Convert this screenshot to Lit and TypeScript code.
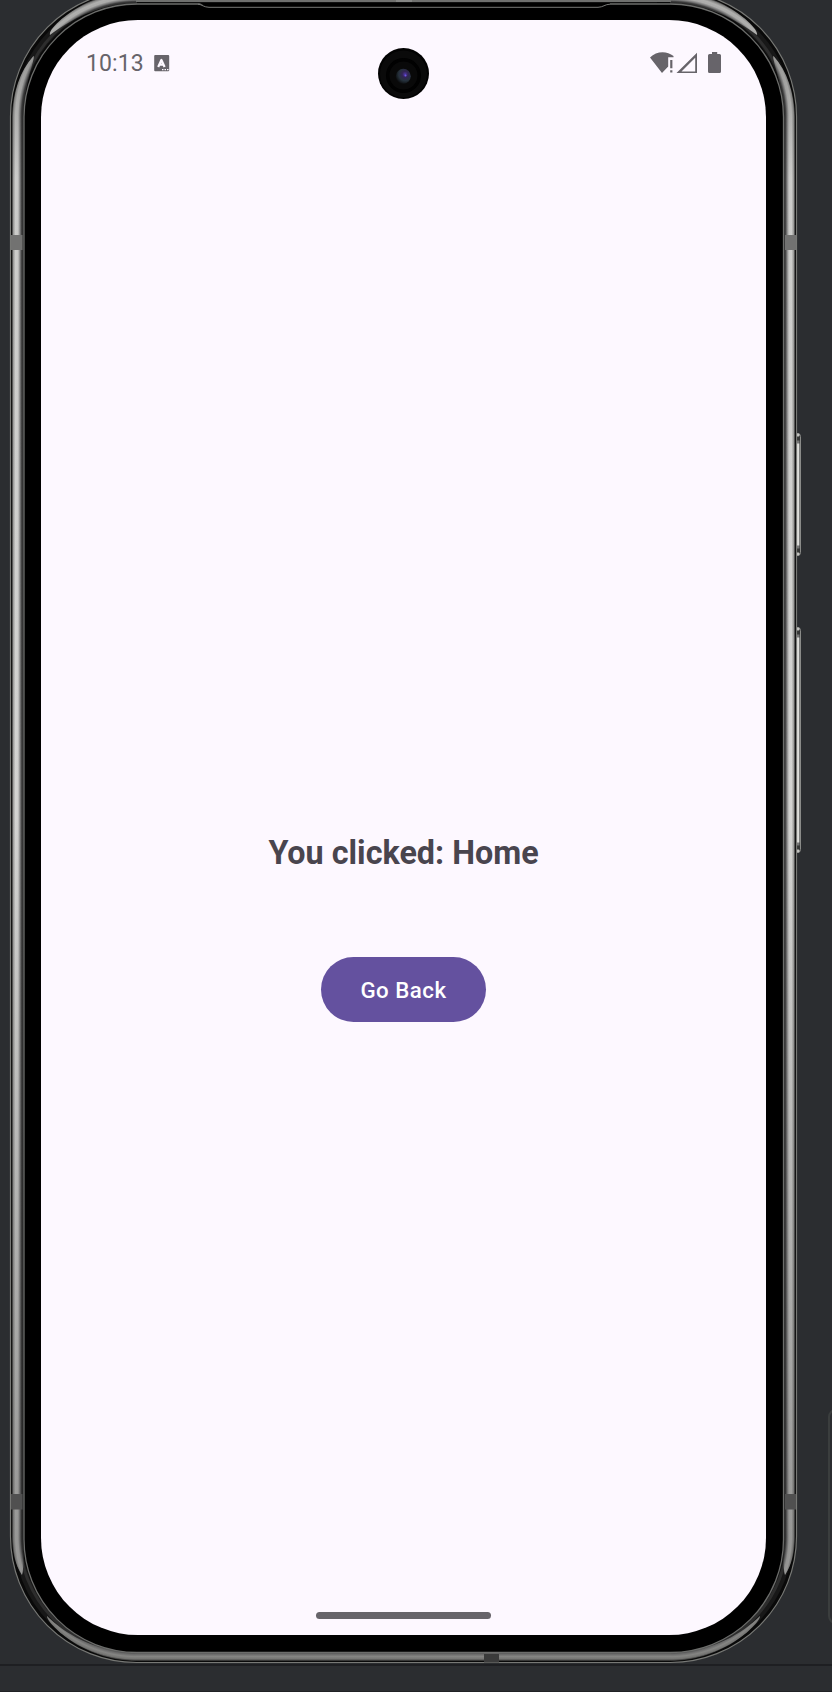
import { LitElement, html, css, svg } from "lit";
import { customElement } from "lit/decorators.js";

@customElement("device-frame")
class DeviceFrame extends LitElement {
  static styles = css`
    :host { display: block; }
    svg { display: block; }
  `;

  private button(y: number, h: number) {
    return svg`
      <rect x="790" y=${y} width="10.500" height=${h} rx="3" fill="#353635" stroke="#8a8b88" stroke-width="1"/>
      <rect x="796" y=${y} width="3.500" height="3" rx="1" fill="#c5c5c2"/>
      <rect x="796" y=${y + h - 3} width="3.500" height="3" rx="1" fill="#c5c5c2"/>
      <rect x="796.500" y=${y + 7} width="3" height=${h - 14} fill="#777"/>
      <rect x="796.800" y=${y + 10} width="2.500" height=${h - 20} fill="#dededb"/>`;
  }

  private cornerStops() {
    return svg`
      <stop offset=".904" stop-color="#1c1c1c"/><stop offset=".925" stop-color="#484848"/>
      <stop offset=".9366" stop-color="#8a8a8a"/><stop offset=".952" stop-color="#cfcfcd"/>
      <stop offset=".971" stop-color="#d6d6d4"/><stop offset=".9885" stop-color="#a0a09e"/>
      <stop offset="1" stop-color="#333"/>`;
  }

  private half() {
    return svg`
      <path fill="url(#side)" d="M12 116.500H24V1536.500H12Z"/>
      <path fill="url(#topCorner)" d="M12 117C12.500 93 20 71 33.500 56C35.500 59 24 82 24 117Z"/>
      <path fill="url(#lowCorner)" d="M12 1536C12 1551 15 1564 22 1575C24.500 1566 23 1552 24 1536Z"/>
      <path fill="url(#shade)" d="M12 117C12.500 93 20 71 33.500 56C35.500 59 24 82 24 117V1536C23 1552 24.500 1566 22 1575C15 1564 12 1551 12 1536Z"/>
      <path fill="url(#topCorner)" fill-opacity=".8" d="M50 35C48 29 70 8 100-3H137V4C100 3 70 20 50 35Z"/>
      <path fill="url(#baseCorner)" d="M47 1616C46 1622 82 1661 137 1661V1652C91 1651 65 1633 47 1616Z"/>`;
  }

  render() {
    return html`<svg width="832" height="1692" viewBox="0 0 832 1692">
      <defs>
        <linearGradient id="side" gradientUnits="userSpaceOnUse" x1="12" x2="24" y1="0" y2="0">
          <stop offset="0" stop-color="#333"/><stop offset=".12" stop-color="#a0a09e"/>
          <stop offset=".3" stop-color="#d6d6d4"/><stop offset=".5" stop-color="#cfcfcd"/>
          <stop offset=".66" stop-color="#8a8a8a"/><stop offset=".78" stop-color="#484848"/><stop offset="1" stop-color="#1c1c1c"/>
        </linearGradient>
        <radialGradient id="topCorner" gradientUnits="userSpaceOnUse" cx="137" cy="117" r="125">${this.cornerStops()}</radialGradient>
        <radialGradient id="lowCorner" gradientUnits="userSpaceOnUse" cx="137" cy="1536" r="125">${this.cornerStops()}</radialGradient>
        <radialGradient id="baseCorner" gradientUnits="userSpaceOnUse" cx="137" cy="1536" r="125">
          <stop offset=".924" stop-color="#333"/><stop offset=".945" stop-color="#686868"/>
          <stop offset=".965" stop-color="#858583"/><stop offset=".985" stop-color="#737371"/><stop offset="1" stop-color="#222"/>
        </radialGradient>
        <linearGradient id="shade" x1="0" x2="0" y1="0" y2="1">
          <stop offset="0" stop-color="#000" stop-opacity=".28"/><stop offset=".08" stop-color="#000" stop-opacity=".04"/>
          <stop offset=".5" stop-color="#000" stop-opacity="0"/><stop offset="1" stop-color="#000" stop-opacity=".3"/>
        </linearGradient>
        <linearGradient id="base" gradientUnits="userSpaceOnUse" x1="0" x2="0" y1="1651.500" y2="1661">
          <stop offset="0" stop-color="#333"/><stop offset=".27" stop-color="#686868"/>
          <stop offset=".53" stop-color="#858583"/><stop offset=".8" stop-color="#737371"/><stop offset="1" stop-color="#222"/>
        </linearGradient>
      </defs>
      ${this.button(433.5, 122)}
      ${this.button(627.5, 225)}
      <rect x="10.500" y="-9.500" width="786" height="1672" rx="126" fill="#090909" stroke="#777875" stroke-width="1.200"/>
      <rect x="18" y="-2" width="771" height="1657" rx="118.500" fill="none" stroke="#181818" stroke-width="8"/>
      <rect x="19.500" y="-.5" width="768" height="1654" rx="117" fill="none" stroke="#2d2d2d" stroke-width="3"/>
      ${this.half()}
      <g transform="translate(807 0) scale(-1 1)">${this.half()}</g>
      <path fill="#6f706e" d="M136-3H671V2H136Z"/>
      <rect x="396" y="0" width="16" height="2" fill="#858684"/>
      <rect x="136" y="1651.500" width="535" height="9.500" fill="url(#base)"/>
      <g fill="#505050">
        <rect x="11" y="235" width="11.500" height="15" fill="#727271"/><rect x="785" y="235" width="11" height="15" fill="#727271"/>
        <rect x="11" y="1494" width="11.500" height="15.500"/><rect x="785" y="1494" width="11" height="15.500"/>
        <rect x="484" y="1654" width="15" height="8.500" fill="#3b3b3b"/>
      </g>
      <rect x="24" y="4" width="759.500" height="1648.500" rx="113" fill="#000" stroke="#6c6d6b" stroke-width="1.300"/>
      <path d="M198 2H610V6H606C600 7 599 7.300 596 7.300H212C208 7.300 206 6.500 204 5.500Z" fill="#000"/>
      <path d="M150 2.500H657" stroke="#111" stroke-width="1"/>
      <path d="M198 4.200C202 4.500 204 7.300 209 7.300H598C603 7.300 605 4.200 610 4.200" fill="none" stroke="#777876" stroke-width="1"/>
    </svg>`;
  }
}

@customElement("front-camera")
class FrontCamera extends LitElement {
  static styles = css`:host { display: block; } svg { display: block; }`;
  render() {
    return html`<svg width="51" height="51" viewBox="0 0 51 51">
      <defs><radialGradient id="lens" cx=".62" cy=".38" r=".65">
        <stop offset="0" stop-color="#5237a8"/><stop offset=".3" stop-color="#322454"/>
        <stop offset=".65" stop-color="#26323c"/><stop offset="1" stop-color="#0d0f11"/>
      </radialGradient></defs>
      <circle cx="25.500" cy="25.500" r="25.500" fill="#020202"/>
      <circle cx="25.500" cy="26" r="23.500" fill="#0a0a0a"/>
      <circle cx="25.500" cy="27.500" r="17.500" fill="#010101"/>
      <circle cx="25.500" cy="27.500" r="14" fill="#090909"/>
      <circle cx="25.300" cy="28.200" r="7.500" fill="url(#lens)"/>
      <circle cx="27.500" cy="27.500" r="1" fill="#6b55e6"/>
    </svg>`;
  }
}

@customElement("status-bar")
class StatusBar extends LitElement {
  static styles = css`
    :host { display: flex; align-items: center; justify-content: space-between; height: 28px; color: #67646a; }
    .side { display: flex; align-items: center; }
    .time { padding-top: 2px; font: 400 23px/28px Roboto, sans-serif; letter-spacing: .1px; }
    .keyboard { margin-left: 10px; }
    svg { display: block; fill: currentColor; }
  `;
  render() {
    return html`
      <div class="side">
        <span class="time">10:13</span>
        <svg class="keyboard" width="16" height="17" viewBox="0 0 16 17">
          <rect x=".2" y="0" width="15" height="16.300" rx="1"/>
          <path d="M4.200 12L7.400 5L10.600 12M5.500 9.600H9.300" fill="none" stroke="#fdf8ff" stroke-width="2.200" stroke-linejoin="round"/>
          <path d="M8 14h1.500v1.300H8zM10.500 14H12v1.300h-1.500zM13 14h1.500v1.300H13z" fill="#fdf8ff"/>
        </svg>
      </div>
      <svg width="72" height="22" viewBox="0 0 72 22">
        <path d="M0 5.600C6.500-1.400 17-1.400 23.500 4V5.200H18.200V14.500L12 21Z"/>
        <path d="M20.200 8H22.400V16.300H20.200ZM20.200 18.300H22.400V20.500H20.200Z"/>
        <path fill-rule="evenodd" d="M26.500 21L47 .7V21ZM31.500 19.400H45.200V5.700Z"/>
        <path d="M62 0H67.200V2H69.500Q71 2 71 3.500V19.500Q71 21 69.500 21H59.500Q58 21 58 19.500V3.500Q58 2 59.500 2H62Z"/>
      </svg>`;
  }
}

@customElement("app-root")
class AppRoot extends LitElement {
  static styles = css`
    :host { display: block; }
    .desk {
      position: relative; box-sizing: border-box; width: 832px; height: 1692px; overflow: hidden;
      padding: 20px 66px 57px 41px; background: #2b2d30; border-bottom: 1px solid #202124;
    }
    .divider { position: absolute; left: 0; right: 0; top: 1664px; height: 2px; background: #1e1f22; }
    .panel {
      position: absolute; left: 828px; top: 1409px; width: 30px; height: 211px;
      border: 2px solid #3b3e3e; border-radius: 8px;
    }
    device-frame { position: absolute; inset: 0; }
    .screen {
      position: relative; box-sizing: border-box; width: 725px; height: 1615px;
      border-radius: 97px; background: #fdf8ff; overflow: hidden;
      display: flex; flex-direction: column; padding: 29px 44px 16px 45px;
    }
    front-camera { position: absolute; left: 337px; top: 28px; }
    .content {
      flex: 1; display: flex; flex-direction: column; align-items: center;
      padding: 755px 1px 0 0; font-family: Roboto, sans-serif;
    }
    h1 { margin: 0; font-size: 32.300px; line-height: 43px; font-weight: 700; color: #49454e; white-space: nowrap; }
    button {
      margin-top: 82px; width: 164.500px; height: 65px; padding: 0; border: 0; border-radius: 33px;
      background: #64519f; color: #fff; font: 500 22.300px/30px Roboto, sans-serif; letter-spacing: .5px;
    }
    .home { align-self: center; width: 175px; height: 7px; margin-right: 2px; border-radius: 4px; background: #67646a; }
  `;
  render() {
    return html`<div class="desk">
      <div class="divider"></div>
      <div class="panel"></div>
      <device-frame></device-frame>
      <main class="screen">
        <status-bar></status-bar>
        <front-camera></front-camera>
        <section class="content"><h1>You clicked: Home</h1><button>Go Back</button></section>
        <div class="home"></div>
      </main>
    </div>`;
  }
}
